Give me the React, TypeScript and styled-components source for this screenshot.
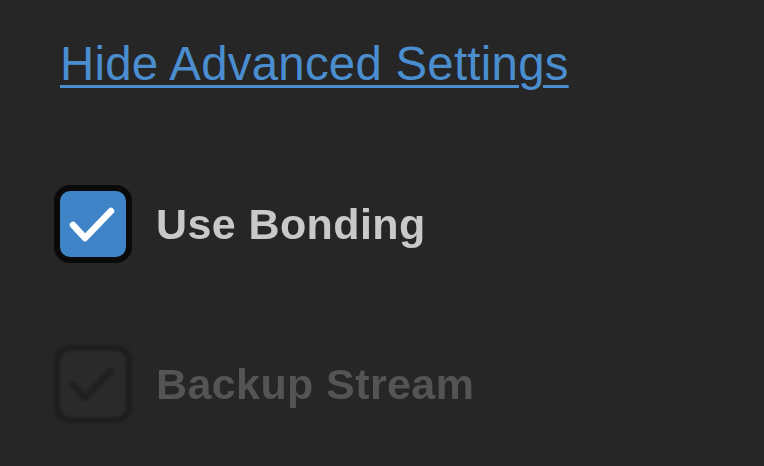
import React, { useState } from 'react';
import styled, { createGlobalStyle } from 'styled-components';

const GlobalStyle = createGlobalStyle`
  html, body {
    margin: 0;
    padding: 0;
    background: #262626;
  }
`;

const Page = styled.div`
  width: 764px;
  height: 466px;
  box-sizing: border-box;
  padding: 40px 0 0 54px;
  background: #262626;
  font-family: "Liberation Sans", Arial, sans-serif;
  overflow: hidden;
`;

const ToggleLink = styled.a`
  display: inline-block;
  margin-left: 6px;
  font-size: 47.4px;
  line-height: 1;
  letter-spacing: 0.25px;
  color: #4a8ed0;
  text-decoration: underline;
  text-decoration-thickness: 3px;
  text-underline-offset: 5px;
  cursor: pointer;
`;

const Options = styled.div`
  display: flex;
  flex-direction: column;
  gap: 82px;
  margin-top: 98px;
`;

const Row = styled.label<{ $disabled?: boolean }>`
  display: flex;
  align-items: center;
  gap: 24px;
  cursor: ${p => (p.$disabled ? 'default' : 'pointer')};
`;

const Box = styled.span<{ $checked: boolean; $disabled?: boolean }>`
  display: flex;
  align-items: center;
  justify-content: center;
  width: 78px;
  height: 78px;
  box-sizing: border-box;
  border: 6px solid ${p => (p.$disabled ? '#1d1d1d' : '#0a0a0a')};
  border-radius: 16px;
  background: ${p => (p.$disabled ? '#2a2a2a' : p.$checked ? '#3f84c6' : '#2a2a2a')};
  filter: ${p => (p.$disabled ? 'blur(1.5px)' : 'blur(0.4px)')};
  flex-shrink: 0;
`;

const Label = styled.span<{ $disabled?: boolean }>`
  font-size: 43px;
  font-weight: 700;
  line-height: 1;
  letter-spacing: 0.4px;
  color: ${p => (p.$disabled ? '#545454' : '#c9c9c9')};
  filter: blur(0.3px);
`;

const Check = ({ color }: { color: string }) => (
  <svg width="66" height="66" viewBox="0 0 66 66">
    <path
      d="M13 34 L25 47 L51 20"
      fill="none"
      stroke={color}
      strokeWidth="6.5"
      strokeLinecap="round"
      strokeLinejoin="round"
    />
  </svg>
);

const App: React.FC = () => {
  const [bonding, setBonding] = useState(true);

  return (
    <Page>
      <GlobalStyle />
      <ToggleLink>Hide Advanced Settings</ToggleLink>
      <Options>
        <Row onClick={() => setBonding(!bonding)}>
          <Box $checked={bonding}>{bonding && <Check color="#ffffff" />}</Box>
          <Label>Use Bonding</Label>
        </Row>
        <Row $disabled>
          <Box $checked $disabled>
            <Check color="#1f1f1f" />
          </Box>
          <Label $disabled>Backup Stream</Label>
        </Row>
      </Options>
    </Page>
  );
};

export default App;
